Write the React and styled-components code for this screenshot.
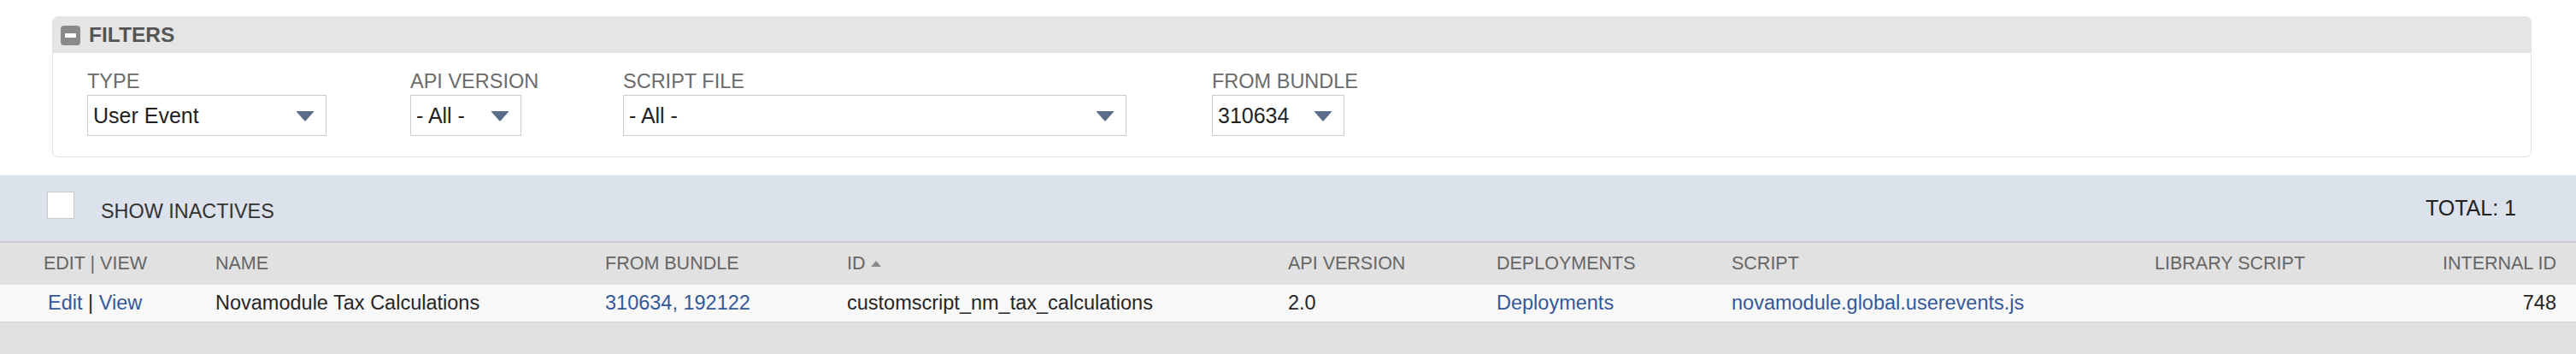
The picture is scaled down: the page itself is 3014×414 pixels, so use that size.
import React from 'react';
import styled, { createGlobalStyle } from 'styled-components';

const filters = [
  { label: 'TYPE', value: 'User Event', col: 378, width: 280 },
  { label: 'API VERSION', value: '- All -', col: 249, width: 130 },
  { label: 'SCRIPT FILE', value: '- All -', col: 689, width: 589 },
  { label: 'FROM BUNDLE', value: '310634', col: 200, width: 155 },
];

const columns = [
  { title: 'EDIT | VIEW', width: 252 },
  { title: 'NAME', width: 456 },
  { title: 'FROM BUNDLE', width: 283 },
  { title: 'ID', width: 516, sorted: true },
  { title: 'API VERSION', width: 244 },
  { title: 'DEPLOYMENTS', width: 275 },
  { title: 'SCRIPT', width: 495 },
  { title: 'LIBRARY SCRIPT', width: 300 },
  { title: 'INTERNAL ID', align: 'right' },
];

const rows = [
  {
    name: 'Novamodule Tax Calculations',
    bundle: '310634, 192122',
    id: 'customscript_nm_tax_calculations',
    api: '2.0',
    script: 'novamodule.global.userevents.js',
    internalId: 748,
  },
];

const SelectArrow = () => (
  <svg width="22" height="13" viewBox="0 0 22 13">
    <path d="M1.5 1 L20.5 1 Q21.5 1 20.8 2 L12 12 Q11 13 10 12 L1.2 2 Q0.5 1 1.5 1 Z" fill="#5a6d8a" />
  </svg>
);

const App = () => {
  return (
    <>
      <GlobalStyle />
      <Page>
        <FilterBox>
          <FilterHeader>
            <MinusIcon />
            <FilterTitle>FILTERS</FilterTitle>
          </FilterHeader>
          <FilterBody>
            {filters.map((f) => (
              <Field key={f.label} $col={f.col}>
                <FieldLabel>{f.label}</FieldLabel>
                <Select $width={f.width}>
                  <span>{f.value}</span>
                  <SelectArrow />
                </Select>
              </Field>
            ))}
          </FilterBody>
        </FilterBox>

        <ListBar>
          <CheckBox />
          <BarLabel>SHOW INACTIVES</BarLabel>
          <Total>TOTAL: 1</Total>
        </ListBar>

        <TableArea>
          <Table>
            <colgroup>
              {columns.map((c, i) => (
                <col key={i} style={c.width ? { width: c.width } : undefined} />
              ))}
            </colgroup>
            <thead>
              <HeadRow>
                {columns.map((c, i) => (
                  <HeadCell key={i} $align={c.align} $first={i === 0}>
                    {c.title}
                    {c.sorted && <SortArrow />}
                  </HeadCell>
                ))}
              </HeadRow>
            </thead>
            <tbody>
              {rows.map((r) => (
                <DataRow key={r.internalId}>
                  <Cell $first>
                    <Link href="#">Edit</Link> | <Link href="#">View</Link>
                  </Cell>
                  <Cell>{r.name}</Cell>
                  <Cell>
                    <Link href="#">{r.bundle}</Link>
                  </Cell>
                  <Cell>{r.id}</Cell>
                  <Cell>{r.api}</Cell>
                  <Cell>
                    <Link href="#">Deployments</Link>
                  </Cell>
                  <Cell>
                    <Link href="#">{r.script}</Link>
                  </Cell>
                  <Cell></Cell>
                  <Cell $align="right">{r.internalId}</Cell>
                </DataRow>
              ))}
            </tbody>
          </Table>
        </TableArea>
      </Page>
    </>
  );
};

export default App;

// ==========================
// Styled Components
// ==========================

const GlobalStyle = createGlobalStyle`
  html, body {
    margin: 0;
    padding: 0;
    background: #ffffff;
    font-family: 'Liberation Sans', Arial, sans-serif;
  }
  #root {
    min-height: 100vh;
  }
`;

const Page = styled.div`
  min-height: 100vh;
  padding-top: 19px;
  box-sizing: border-box;
  display: flex;
  flex-direction: column;
`;

const FilterBox = styled.div`
  margin: 0 52px 0 61px;
  border: 1px solid #e1e1e1;
  border-radius: 7px;
  overflow: hidden;
  background: #ffffff;
`;

const FilterHeader = styled.div`
  height: 42px;
  background: #e5e5e5;
  display: flex;
  align-items: center;
  gap: 10px;
  padding-left: 9px;
`;

const MinusIcon = styled.span`
  width: 23px;
  height: 23px;
  border-radius: 4px;
  background: #8a8a8a;
  display: flex;
  align-items: center;
  justify-content: center;

  &::after {
    content: '';
    width: 13px;
    height: 5px;
    border-radius: 1px;
    background: #ffffff;
  }
`;

const FilterTitle = styled.span`
  font-size: 24.5px;
  font-weight: 700;
  color: #555555;
`;

const FilterBody = styled.div`
  display: flex;
  padding: 20px 0 24px 40px;
`;

const Field = styled.div`
  width: ${(p) => p.$col}px;
  display: flex;
  flex-direction: column;
`;

const FieldLabel = styled.div`
  font-size: 23.5px;
  line-height: 27px;
  color: #6b6b6b;
  margin-bottom: 2px;
`;

const Select = styled.div`
  width: ${(p) => p.$width}px;
  height: 48px;
  box-sizing: border-box;
  border: 1.5px solid #cccccc;
  background: #ffffff;
  display: flex;
  align-items: center;
  justify-content: space-between;
  padding: 0 13px 0 6px;
  font-size: 25px;
  color: #222222;
`;

const ListBar = styled.div`
  margin-top: 21px;
  height: 77px;
  background: #dce2eb;
  display: flex;
  align-items: flex-start;
  padding: 0 70px 0 55px;
`;

const CheckBox = styled.span`
  margin-top: 19px;
  width: 32px;
  height: 32px;
  box-sizing: border-box;
  background: #ffffff;
  border: 1.5px solid #c9c9c9;
`;

const BarLabel = styled.span`
  margin: 29px 0 0 31px;
  font-size: 23.4px;
  line-height: 26px;
  color: #333333;
`;

const Total = styled.span`
  margin-left: auto;
  align-self: center;
  font-size: 25px;
  color: #222222;
`;

const TableArea = styled.div`
  flex: 1;
  background: #e1e1e1;
`;

const Table = styled.table`
  width: 100%;
  table-layout: fixed;
  border-collapse: collapse;
`;

const HeadRow = styled.tr`
  height: 50px;
  background: #e1e1e1;
  border-top: 2px solid #cbcbcb;
`;

const HeadCell = styled.th`
  padding: 0 23px 0 ${(p) => (p.$first ? '51px' : '0')};
  text-align: ${(p) => p.$align || 'left'};
  font-size: 21.5px;
  font-weight: 400;
  color: #666666;
  white-space: nowrap;
`;

const SortArrow = styled.span`
  display: inline-block;
  margin-left: 6px;
  vertical-align: 3px;
  border-left: 6px solid transparent;
  border-right: 6px solid transparent;
  border-bottom: 7px solid #8a8a8a;
`;

const DataRow = styled.tr`
  height: 43px;
  background: #f8f8f8;
  border-bottom: 1px solid #d8d8d8;
`;

const Cell = styled.td`
  padding: 0 23px 0 ${(p) => (p.$first ? '56px' : '0')};
  text-align: ${(p) => p.$align || 'left'};
  font-size: 23.5px;
  color: #262626;
  white-space: nowrap;
`;

const Link = styled.a`
  color: #34589a;
  text-decoration: none;
`;
